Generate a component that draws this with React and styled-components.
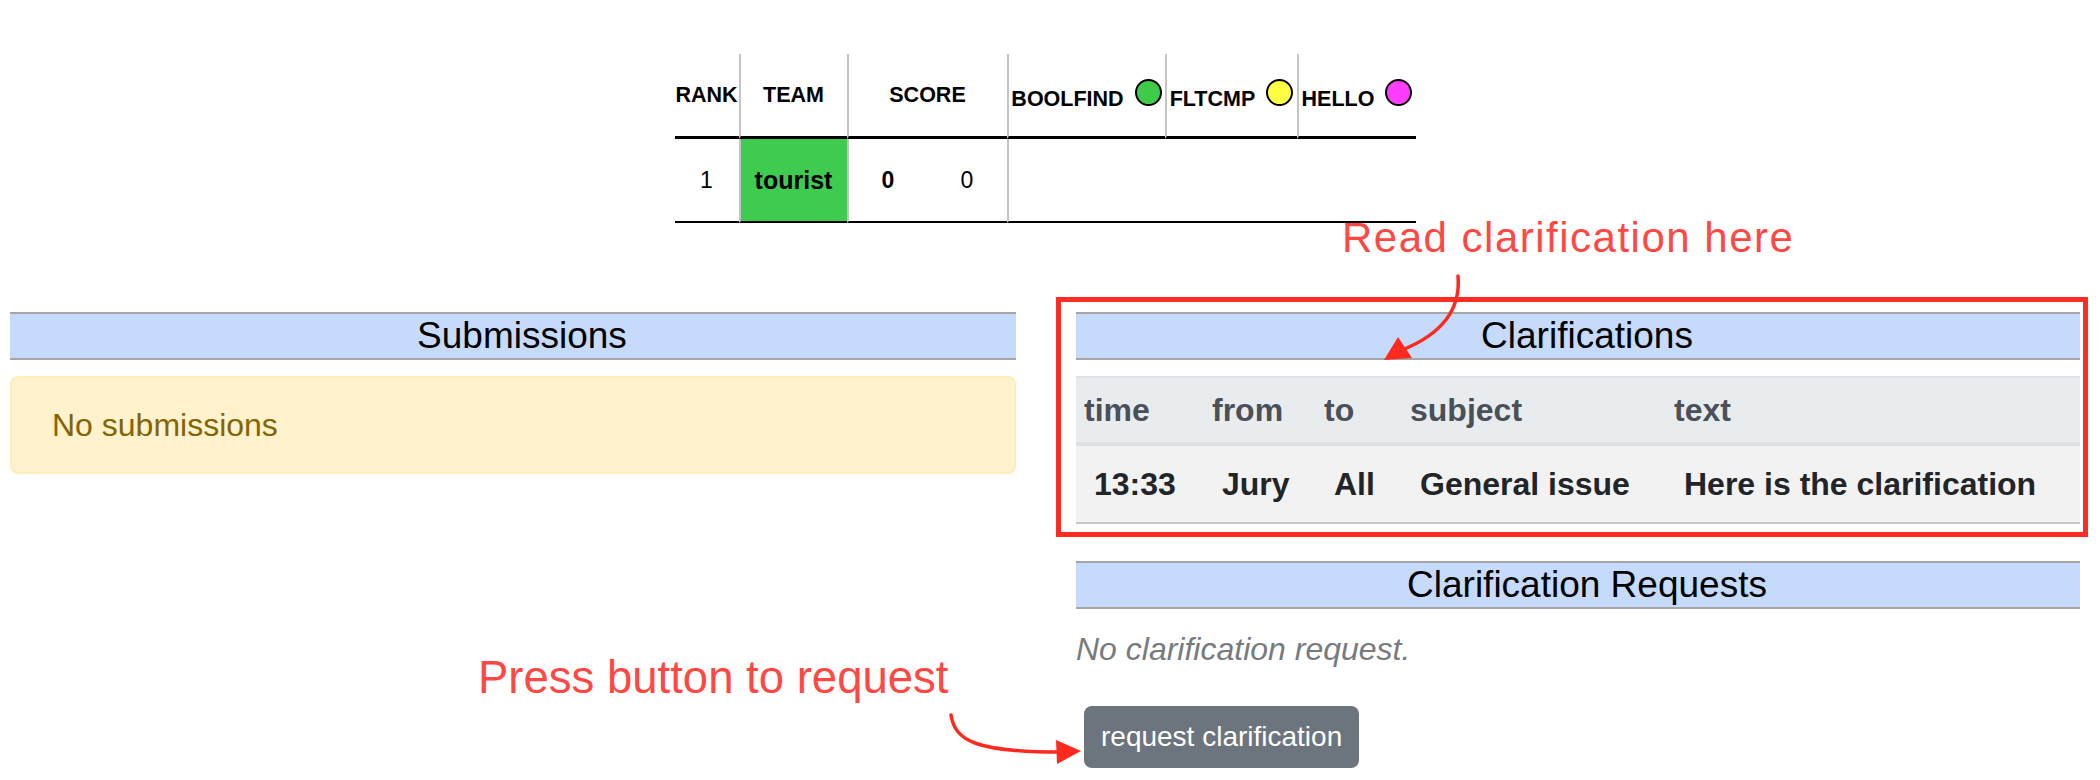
import React from "react";
import styled, { createGlobalStyle } from "styled-components";

const problems = [
  { code: "BOOLFIND", color: "#3ecb4a", width: 158 },
  { code: "FLTCMP", color: "#ffff44", width: 132 },
  { code: "HELLO", color: "#ff3dff", width: 119 },
];

const clarColumns = [
  { key: "time", width: 128 },
  { key: "from", width: 112 },
  { key: "to", width: 86 },
  { key: "subject", width: 264 },
  { key: "text" },
];

const clarifications = [
  { time: "13:33", from: "Jury", to: "All", subject: "General issue", text: "Here is the clarification" },
];

export default function App() {
  return (
    <>
      <GlobalStyle />
      <Page>
        <ScoreTable>
          <colgroup>
            <col style={{ width: 64 }} />
            <col style={{ width: 108 }} />
            <col style={{ width: 81 }} />
            <col style={{ width: 79 }} />
            {problems.map((p) => (
              <col key={p.code} style={{ width: p.width }} />
            ))}
          </colgroup>
          <thead>
            <tr>
              <HeadCell $first>RANK</HeadCell>
              <HeadCell>TEAM</HeadCell>
              <HeadCell colSpan={2}>SCORE</HeadCell>
              {problems.map((p) => (
                <HeadCell key={p.code}>
                  {p.code}
                  <Balloon $color={p.color} />
                </HeadCell>
              ))}
            </tr>
          </thead>
          <tbody>
            <tr>
              <BodyCell $first>1</BodyCell>
              <BodyCell $bg="#3ecb4f" $bold $size={25}>tourist</BodyCell>
              <BodyCell $bold>0</BodyCell>
              <BodyCell $first>0</BodyCell>
              <BodyCell colSpan={3} />
            </tr>
          </tbody>
        </ScoreTable>

        <Columns>
          <Column>
            <Heading>Submissions</Heading>
            <Alert>No submissions</Alert>
          </Column>

          <Column>
            <Highlighted>
              <Heading>Clarifications</Heading>
              <ClarTable>
                <colgroup>
                  {clarColumns.map((c) => (
                    <col key={c.key} style={c.width ? { width: c.width } : undefined} />
                  ))}
                </colgroup>
                <thead>
                  <tr>
                    {clarColumns.map((c) => (
                      <ClarHead key={c.key}>{c.key}</ClarHead>
                    ))}
                  </tr>
                </thead>
                <tbody>
                  {clarifications.map((row, i) => (
                    <tr key={i}>
                      {clarColumns.map((c) => (
                        <ClarCell key={c.key}>{row[c.key]}</ClarCell>
                      ))}
                    </tr>
                  ))}
                </tbody>
              </ClarTable>
            </Highlighted>

            <Heading $gap={37}>Clarification Requests</Heading>
            <Empty>No clarification request.</Empty>
            <RequestButton type="button">request clarification</RequestButton>
          </Column>
        </Columns>

        {/* annotations drawn over the page */}
        <Note $x={1342} $y={217} $size={42} $spacing={1.5}>Read clarification here</Note>
        <Arrow $x={1370} $y={265} width="100" height="105" viewBox="1370 265 100 105">
          <path d="M1458 276 C1461 310 1442 334 1402 350" fill="none" stroke="#ff2a1f" strokeWidth="3.5" strokeLinecap="round" />
          <polygon points="1384,360 1398,337 1412,358" fill="#ff2a1f" />
        </Arrow>

        <Note $x={478} $y={655} $size={45.5}>Press button to request</Note>
        <Arrow $x={940} $y={705} width="150" height="65" viewBox="940 705 150 65">
          <path d="M951 715 C955 741 976 752 1060 752" fill="none" stroke="#ff2a1f" strokeWidth="3.5" strokeLinecap="round" />
          <polygon points="1081,751 1056,740 1057,764" fill="#ff2a1f" />
        </Arrow>
      </Page>
    </>
  );
}

/* ===== styles ===== */
const GlobalStyle = createGlobalStyle`
  body {
    margin: 0;
    background: #fff;
    font-family: "Liberation Sans", Helvetica, Arial, sans-serif;
  }
`;

const Page = styled.div`
  position: relative;
  box-sizing: border-box;
  width: 2100px;
  height: 780px;
  padding: 54px 20px 0 10px;
  overflow: hidden;
  color: #000;
`;

const ScoreTable = styled.table`
  margin: 0 auto;
  width: 741px;
  table-layout: fixed;
  border-collapse: separate;
  border-spacing: 0;
`;

const HeadCell = styled.th`
  height: 82px;
  padding: 0 1px;
  font-size: 21.5px;
  font-weight: 700;
  text-align: center;
  white-space: nowrap;
  border-bottom: 3px solid #000;
  border-left: ${(p) => (p.$first ? "none" : "2px solid #c4c4c4")};
`;

const Balloon = styled.span`
  display: inline-block;
  box-sizing: border-box;
  width: 27px;
  height: 27px;
  margin-left: 11px;
  border-radius: 50%;
  border: 2px solid #000;
  background: ${(p) => p.$color};
`;

const BodyCell = styled.td`
  height: 82px;
  padding: 0;
  text-align: center;
  font-size: ${(p) => p.$size || 23}px;
  font-weight: ${(p) => (p.$bold ? 700 : 400)};
  background: ${(p) => p.$bg || "transparent"};
  border-bottom: 2px solid #000;
  border-left: ${(p) => (p.$first ? "none" : "2px solid #c4c4c4")};
`;

const Columns = styled.div`
  display: grid;
  grid-template-columns: 1006px 1004px;
  column-gap: 60px;
  margin-top: 89px;
  align-items: start;
`;

const Column = styled.div`
  display: flex;
  flex-direction: column;
  align-items: stretch;
`;

const Heading = styled.div`
  margin-top: ${(p) => p.$gap || 0}px;
  margin-bottom: 16px;
  padding-left: 18px;
  height: 44px;
  line-height: 44px;
  font-size: 37px;
  text-align: center;
  background: #c6dafb;
  border-top: 2px solid #a6a6a6;
  border-bottom: 2px solid #a6a6a6;
`;

const Alert = styled.div`
  padding: 23px 40px;
  line-height: 48px;
  font-size: 32px;
  color: #856404;
  background: #fff2cd;
  border: 2px solid #ffedb9;
  border-radius: 8px;
`;

const Highlighted = styled.div`
  position: relative;

  &::after {
    content: "";
    position: absolute;
    top: -15px;
    right: -8px;
    bottom: -13px;
    left: -20px;
    border: 5px solid #ff2d21;
    pointer-events: none;
  }
`;

const ClarTable = styled.table`
  width: 100%;
  table-layout: fixed;
  border-collapse: separate;
  border-spacing: 0;
`;

const ClarHead = styled.th`
  height: 64px;
  padding: 0 8px;
  text-align: left;
  font-size: 32px;
  font-weight: 700;
  color: #495057;
  background: #e9ecef;
  border-top: 2px solid #dee2e6;
  border-bottom: 4px solid #dee2e6;
`;

const ClarCell = styled.td`
  height: 76px;
  padding: 0 0 0 18px;
  font-size: 32px;
  font-weight: 700;
  color: #212529;
  background: #f2f2f2;
  white-space: nowrap;
  border-bottom: 2px solid #c6c6c6;
`;

const Empty = styled.p`
  margin: 0;
  line-height: 48px;
  font-size: 32px;
  font-style: italic;
  color: #777b80;
`;

const RequestButton = styled.button`
  align-self: flex-start;
  margin: 33px 0 0 8px;
  padding: 10px 17px;
  line-height: 42px;
  font-family: inherit;
  font-size: 28px;
  color: #fff;
  background: #6c757d;
  border: 0;
  border-radius: 8px;
  cursor: pointer;
`;

const Note = styled.div`
  position: absolute;
  left: ${(p) => p.$x}px;
  top: ${(p) => p.$y}px;
  font-size: ${(p) => p.$size}px;
  letter-spacing: ${(p) => p.$spacing || 0}px;
  line-height: 1;
  white-space: nowrap;
  color: #ff4843;
`;

const Arrow = styled.svg`
  position: absolute;
  left: ${(p) => p.$x}px;
  top: ${(p) => p.$y}px;
  overflow: visible;
  pointer-events: none;
`;
